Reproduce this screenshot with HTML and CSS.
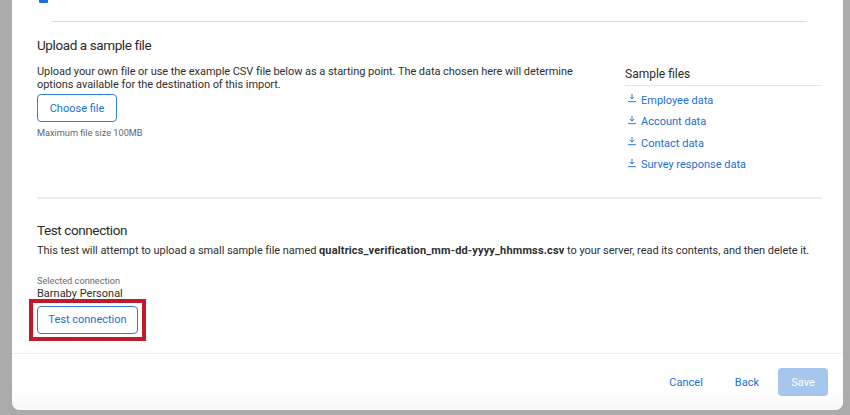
FILE: index.html
```html
<!DOCTYPE html>
<html lang="en">
<head>
    <meta charset="UTF-8">
    <title>Import destination - sample file</title>
    <link rel="stylesheet" href="styles.css">
</head>
<body>

<div class="modal">
    <div class="modal-body">
        <!-- tail of the option list scrolled above -->
        <div class="check-stub"></div>
        <div class="sub-divider"></div>

        <!-- Upload a sample file -->
        <section class="section upload">
            <h2 class="section-title">Upload a sample file</h2>
            <div class="upload-row">
                <div class="upload-main">
                    <p class="text">Upload your own file or use the example CSV file below as a starting point. The data chosen here will determine options available for the destination of this import.</p>
                    <button class="btn-outline btn-choose">Choose file</button>
                    <p class="hint">Maximum file size 100MB</p>
                </div>
                <div class="sample-files">
                    <h3 class="sample-title">Sample files</h3>
                    <ul class="sample-list">
                        <li><a href="#"><svg class="dl-icon" viewBox="0 0 12 12"><path d="M6 1v6.2M3.6 4.9L6 7.3l2.4-2.4M1.3 10.4h9.4" fill="none" stroke="currentColor" stroke-width="1.1"/></svg>Employee data</a></li>
                        <li><a href="#"><svg class="dl-icon" viewBox="0 0 12 12"><path d="M6 1v6.2M3.6 4.9L6 7.3l2.4-2.4M1.3 10.4h9.4" fill="none" stroke="currentColor" stroke-width="1.1"/></svg>Account data</a></li>
                        <li><a href="#"><svg class="dl-icon" viewBox="0 0 12 12"><path d="M6 1v6.2M3.6 4.9L6 7.3l2.4-2.4M1.3 10.4h9.4" fill="none" stroke="currentColor" stroke-width="1.1"/></svg>Contact data</a></li>
                        <li><a href="#"><svg class="dl-icon" viewBox="0 0 12 12"><path d="M6 1v6.2M3.6 4.9L6 7.3l2.4-2.4M1.3 10.4h9.4" fill="none" stroke="currentColor" stroke-width="1.1"/></svg>Survey response data</a></li>
                    </ul>
                </div>
            </div>
        </section>

        <div class="divider"></div>

        <!-- Test connection -->
        <section class="section test">
            <h2 class="section-title">Test connection</h2>
            <p class="text">This test will attempt to upload a small sample file named <b>qualtrics_verification_mm-dd-yyyy_hhmmss.csv</b> to your server, read its contents, and then delete it.</p>
            <p class="label">Selected connection</p>
            <p class="value">Barnaby Personal</p>
            <div class="highlight">
                <button class="btn-outline btn-test">Test connection</button>
            </div>
        </section>
    </div>

    <!-- Footer -->
    <div class="modal-footer">
        <button class="btn-link">Cancel</button>
        <button class="btn-link">Back</button>
        <button class="btn-primary" disabled>Save</button>
    </div>
</div>

</body>
</html>
```

FILE: styles.css
```css
body {
    margin: 0;
    height: 415px;
    background-color: #ababab;
    font-family: Roboto, 'Liberation Sans', Arial, sans-serif;
    color: #333;
    overflow: hidden;
}

.modal {
    margin-left: 12px;
    width: 831px;
    height: 410px;
    background: #fff;
    border-radius: 0 0 8px 8px;
    display: flex;
    flex-direction: column;
}

.modal-body {
    flex: 1;
    padding: 0 21px 0 25px;
}

.check-stub {
    width: 9px;
    height: 3px;
    margin-left: 2px;
    background: #1b6fd1;
    border-radius: 0 0 1px 1px;
}

.sub-divider {
    height: 1px;
    margin: 18px 15px 0 15px;
    background: #dcdcdc;
}

.divider {
    height: 2px;
    margin-top: 19px;
    background: #ededed;
}

.section-title {
    margin: 0;
    font-size: 13.5px;
    font-weight: 400;
    letter-spacing: -0.4px;
    line-height: 20px;
    color: #2b2b2b;
}

.upload .section-title {
    margin-top: 13px;
}

.upload-row {
    display: flex;
    gap: 35px;
    margin-top: 10px;
}

.upload-main {
    flex: 1;
}

.text {
    margin: 0;
    font-size: 11px;
    letter-spacing: -0.05px;
    line-height: 13px;
    color: #2f2f2f;
}

.text b {
    letter-spacing: 0.15px;
}

.btn-outline {
    display: block;
    box-sizing: border-box;
    height: 28px;
    padding: 0;
    border: 1px solid #2f7fd6;
    border-radius: 4px;
    background: #fff;
    color: #1b6fd1;
    font-family: inherit;
    font-size: 11px;
    white-space: nowrap;
}

.btn-choose {
    margin-top: 3px;
    width: 80px;
}

.hint {
    margin: 5px 0 0;
    font-size: 9.2px;
    line-height: 12px;
    color: #666;
}

.sample-files {
    width: 197px;
    padding-top: 1px;
}

.sample-title {
    margin: 0;
    padding-bottom: 3px;
    border-bottom: 1px solid #e6e6e6;
    font-size: 12px;
    font-weight: 400;
    line-height: 16px;
    color: #2b2b2b;
}

.sample-list {
    list-style: none;
    margin: 5.5px 0 0;
    padding: 0;
}

.sample-list li {
    height: 21.6px;
    line-height: 17px;
}

.sample-list a {
    display: flex;
    align-items: center;
    gap: 4px;
    padding-left: 2px;
    font-size: 11px;
    color: #1b6fd1;
    text-decoration: none;
}

.dl-icon {
    width: 10px;
    height: 10px;
    margin-top: -4px;
}

.test .section-title {
    margin-top: 21px;
}

.test .text {
    margin-top: 4px;
}

.label {
    margin: 18px 0 0;
    font-size: 9.2px;
    line-height: 12px;
    color: #6b6b6b;
}

.value {
    margin: 0;
    font-size: 11px;
    line-height: 13px;
    color: #2f2f2f;
}

/* red annotation box round the button */
.highlight {
    display: table;
    margin: -1px 0 0 -8px;
    padding: 3px 4px;
    border: 4px solid #c01b2c;
}

.btn-test {
    width: 101px;
}

.modal-footer {
    height: 56px;
    border-top: 1px solid #eeeeee;
    display: flex;
    justify-content: flex-end;
    align-items: center;
    padding-right: 15px;
    background: linear-gradient(#fff 60%, #f8f8f8);
    border-radius: 0 0 8px 8px;
}

.btn-link {
    border: 0;
    background: none;
    color: #1b6fd1;
    font-family: inherit;
    font-size: 11px;
    padding: 0 16px;
    height: 28px;
}

.btn-primary {
    width: 50px;
    height: 28px;
    margin-left: 3px;
    border: 0;
    border-radius: 4px;
    background: #a6c6ee;
    color: #fff;
    font-family: inherit;
    font-size: 11px;
}
```
